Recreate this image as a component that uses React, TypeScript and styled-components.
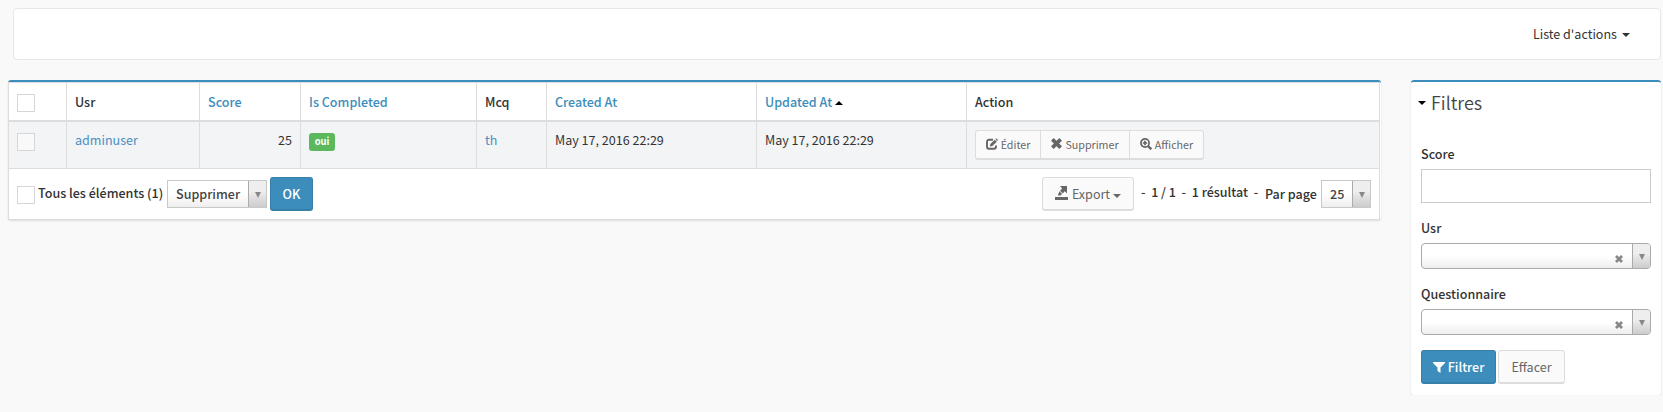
import React from 'react';
import styled, { createGlobalStyle, css } from 'styled-components';

const Global = createGlobalStyle`
  * { box-sizing: border-box; }
  body {
    margin: 0;
    background: #f9f9f9;
    color: #333;
    font-family: "Source Sans Pro", "Noto Sans CJK SC", "Noto Sans", sans-serif;
    font-size: 12.55px;
    line-height: 20px;
  }
`;

const Page = styled.div`
  width: 1663px;
  padding: 8px 0 0;
`;

const Navbar = styled.nav`
  display: flex;
  justify-content: flex-end;
  align-items: center;
  height: 52px;
  margin: 0 2px 20px 13px;
  padding: 0 30px 1px 0;
  background: #fff;
  border: 1px solid #e7e7e7;
  border-radius: 4px;
`;

const NavLink = styled.a`
  display: flex;
  align-items: center;
  gap: 5px;
`;

const Caret = styled.span<{ $up?: boolean }>`
  display: inline-block;
  width: 0;
  height: 0;
  border-left: 4px solid transparent;
  border-right: 4px solid transparent;
  ${p => (p.$up ? css`border-bottom: 4px solid currentColor;` : css`border-top: 4px solid currentColor;`)}
`;

const NavCaret = styled(Caret)`
  margin-top: 3px;
`;

const Content = styled.main`
  display: flex;
  align-items: flex-start;
  gap: 30px;
  padding-left: 8px;
`;

const Box = styled.section<{ $width: number }>`
  width: ${p => p.$width}px;
  background: #fff;
  border-top: 2px solid #3c8dbc;
  border-radius: 3px;
  box-shadow: 0 1px 2px rgba(0, 0, 0, 0.12);
`;

const ListTable = styled.table`
  width: 1372px;
  table-layout: fixed;
  border-collapse: separate;
  border-spacing: 0;
  border: 1px solid #ddd;
  border-bottom: 0;
`;

const HeadCell = styled.th<{ $sortable?: boolean }>`
  height: 39px;
  padding: 9px 8px 8px;
  border-bottom: 2px solid #ddd;
  text-align: left;
  vertical-align: top;
  font-weight: 500;
  color: ${p => (p.$sortable ? '#3c8dbc' : '#333')};
  & + & { border-left: 1px solid #ddd; }
`;

const Cell = styled.td<{ $right?: boolean }>`
  height: 47px;
  padding: 8px;
  vertical-align: top;
  text-align: ${p => (p.$right ? 'right' : 'left')};
  background: #f3f4f5;
  border-bottom: 1px solid #ddd;
  & + & { border-left: 1px solid #ddd; }
`;

const SortMark = styled.span`
  color: #000;
  margin-left: 3px;
  ${Caret} { vertical-align: 2px; }
`;

const Link = styled.a`
  color: #4a8fc2;
`;

const Check = styled.span<{ $muted?: boolean }>`
  display: block;
  width: 18px;
  height: 18px;
  margin-top: ${p => (p.$muted ? 3 : 2)}px;
  background: ${p => (p.$muted ? '#f9f9f9' : '#fff')};
  border: 1px solid #d6d6d6;
`;

const Badge = styled.span`
  display: block;
  width: 26px;
  height: 18px;
  margin-top: 3px;
  border-radius: 3px;
  background: #5cb85c;
  color: #fff;
  font-size: 9.4px;
  font-weight: 700;
  line-height: 17px;
  text-align: center;
`;

const ButtonGroup = styled.div`
  display: flex;
  height: 30px;
`;

const SmallButton = styled.button<{ $width: number }>`
  display: flex;
  align-items: center;
  justify-content: center;
  gap: 3px;
  width: ${p => p.$width}px;
  padding: 0;
  border: 1px solid #ddd;
  border-bottom-width: 2px;
  background: #fafafa;
  color: #666;
  font: inherit;
  font-size: 10.7px;
  & + & { margin-left: -1px; }
  &:first-child { border-radius: 3px 0 0 3px; }
  &:last-child { border-radius: 0 3px 3px 0; }
  svg { margin-bottom: 2px; }
`;

const Button = styled.button<{ $primary?: boolean; $width: number }>`
  display: flex;
  align-items: center;
  justify-content: center;
  gap: 3px;
  width: ${p => p.$width}px;
  height: 34px;
  padding: 1px 0 0;
  border: 1px solid ${p => (p.$primary ? '#367fa9' : '#ddd')};
  border-bottom-width: 2px;
  border-radius: 3px;
  background: ${p => (p.$primary ? '#3c8dbc' : '#fafafa')};
  color: ${p => (p.$primary ? '#fff' : '#666')};
  font: inherit;
  font-weight: ${p => (p.$primary ? 500 : 400)};
`;

const ExportButton = styled(Button)`
  ${Caret} { margin-top: 3px; }
  svg { margin-bottom: 3px; }
`;

const Footer = styled.div`
  display: flex;
  justify-content: space-between;
  height: 51px;
  width: 1372px;
  padding: 8px;
  border: 1px solid #ddd;
  border-top: 0;
  font-weight: 500;
`;

const FooterSide = styled.div`
  display: flex;
  align-items: flex-start;
`;

const BatchLabel = styled.span`
  width: 126px;
  margin: 6px 3px 0 3px;
  white-space: nowrap;
`;

const FooterCheck = styled(Check)`
  margin-top: 9px;
`;

const PagerText = styled.span`
  width: 118px;
  margin: 5px 6px 0 7px;
  white-space: pre;
`;

const PerPage = styled.span`
  width: 52px;
  margin: 7px 4px 0 0;
  white-space: nowrap;
`;

const Select = styled.span<{ $width: number }>`
  display: flex;
  width: ${p => p.$width}px;
  height: 28px;
  margin: 3px 0 0;
  border: 1px solid #c8c8c8;
  background: linear-gradient(to top, #eee 0%, #fff 50%);
  color: #444;
`;

const BatchSelect = styled(Select)`
  margin-right: 3px;
`;

const SelectValue = styled.span`
  flex: 1;
  padding: 3px 0 0 8px;
`;

const SelectArrow = styled.span`
  display: flex;
  align-items: center;
  justify-content: center;
  width: 18px;
  padding-top: 1px;
  border-left: 1px solid #aaa;
  background: linear-gradient(to top, #ccc 0%, #eee 60%);
`;

const Triangle = styled.span`
  border-left: 3px solid transparent;
  border-right: 3px solid transparent;
  border-top: 6px solid #888;
`;

const FilterHeader = styled.h3`
  display: flex;
  align-items: center;
  gap: 5px;
  margin: 0;
  height: 41px;
  padding: 0 0 1px 7px;
  color: #444;
  font-size: 18px;
  font-weight: 350;
  ${Caret} { color: #000; margin-top: 1px; }
`;

const Filters = styled.form`
  padding: 21px 10px 11px;
`;

const Field = styled.div`
  display: flex;
  flex-direction: column;
  margin-bottom: 15px;
`;

const Label = styled.label`
  height: 25px;
  font-weight: 500;
`;

const Input = styled.input`
  width: 230px;
  height: 34px;
  padding: 6px 12px;
  border: 1px solid #ccc;
  font: inherit;
`;

const Combo = styled.span`
  display: flex;
  height: 26px;
  border: 1px solid #aaa;
  border-radius: 4px;
  overflow: hidden;
  background: linear-gradient(to top, #eee 0%, #fff 50%);
`;

const ComboBody = styled.span`
  display: flex;
  flex: 1;
  justify-content: flex-end;
  padding: 11px 9px 0 0;
`;

const Actions = styled.div`
  display: flex;
  gap: 2px;
`;

const EditIcon = () => (
  <svg width="12" height="12" viewBox="0 0 12 12">
    <path d="M7 1.800H3Q1 1.800 1 3.800v5Q1 10.800 3 10.800h5Q10 10.800 10 8.800V7.400" fill="none" stroke="#666" strokeWidth="1.900" />
    <path d="M3.800 8.600l.5-2.500L8.800 1.700l2 2-4.500 4.400z" fill="#666" />
    <path d="M9.400 1.100l.8-.8 1.800 1.800-.8.800z" fill="#666" />
  </svg>
);

const CrossIcon = ({ size = 11, color = '#666' }: { size?: number; color?: string }) => (
  <svg width={size} height={size} viewBox="0 0 10 10">
    <path d="M2.400 0L5 2.600 7.600 0 10 2.400 7.400 5 10 7.600 7.600 10 5 7.400 2.400 10 0 7.600 2.600 5 0 2.400z" fill={color} />
  </svg>
);

const ZoomIcon = () => (
  <svg width="12" height="12" viewBox="0 0 12 12">
    <circle cx="5" cy="5" r="4.100" fill="none" stroke="#666" strokeWidth="1.700" />
    <path d="M8 8l3.300 3.300" stroke="#666" strokeWidth="2.400" />
    <path d="M5 2.800v4.400M2.800 5h4.400" stroke="#666" strokeWidth="1.700" />
  </svg>
);

const ExportIcon = () => (
  <svg width="14" height="14" viewBox="0 0 14 14">
    <path d="M0 11h13v3H0z" fill="#666" />
    <path d="M5 0h7v7.500L9.800 5.200 7.600 7.400 5 4.700 7.200 2.500z" fill="#666" />
    <path d="M4.400 5.300L7 8 5.500 9.500H2.800z" fill="#666" />
  </svg>
);

const FunnelIcon = () => (
  <svg width="12" height="11" viewBox="0 0 12 11">
    <path d="M0 0h12v1L7.500 5.500V11L4.500 9V5.500L0 1z" fill="#fff" />
  </svg>
);

const widths = [57, 133, 101, 176, 70, 210, 210, 413];

export default function App() {
  return (
    <Page>
      <Global />
      <Navbar>
        <NavLink>Liste d'actions <NavCaret /></NavLink>
      </Navbar>
      <Content>
        <Box $width={1373}>
          <ListTable>
            <colgroup>{widths.map((w, i) => <col key={i} width={w} />)}</colgroup>
            <thead>
              <tr>
                <HeadCell><Check /></HeadCell>
                <HeadCell>Usr</HeadCell>
                <HeadCell $sortable>Score</HeadCell>
                <HeadCell $sortable>Is Completed</HeadCell>
                <HeadCell>Mcq</HeadCell>
                <HeadCell $sortable>Created At</HeadCell>
                <HeadCell $sortable>Updated At<SortMark><Caret $up /></SortMark></HeadCell>
                <HeadCell>Action</HeadCell>
              </tr>
            </thead>
            <tbody>
              <tr>
                <Cell><Check $muted /></Cell>
                <Cell><Link>adminuser</Link></Cell>
                <Cell $right>25</Cell>
                <Cell><Badge>oui</Badge></Cell>
                <Cell><Link>th</Link></Cell>
                <Cell>May 17, 2016 22:29</Cell>
                <Cell>May 17, 2016 22:29</Cell>
                <Cell>
                  <ButtonGroup>
                    <SmallButton $width={66}><EditIcon />Éditer</SmallButton>
                    <SmallButton $width={90}><CrossIcon />Supprimer</SmallButton>
                    <SmallButton $width={75}><ZoomIcon />Afficher</SmallButton>
                  </ButtonGroup>
                </Cell>
              </tr>
            </tbody>
          </ListTable>
          <Footer>
            <FooterSide>
              <FooterCheck />
              <BatchLabel>Tous les éléments (1)</BatchLabel>
              <BatchSelect $width={100}><SelectValue>Supprimer</SelectValue><SelectArrow><Triangle /></SelectArrow></BatchSelect>
              <Button $primary $width={43}>OK</Button>
            </FooterSide>
            <FooterSide>
              <ExportButton $width={92}><ExportIcon />Export<Caret /></ExportButton>
              <PagerText>-  1 / 1  -  1 résultat  -</PagerText>
              <PerPage>Par page</PerPage>
              <Select $width={50}><SelectValue>25</SelectValue><SelectArrow><Triangle /></SelectArrow></Select>
            </FooterSide>
          </Footer>
        </Box>
        <Box $width={250}>
          <FilterHeader><Caret />Filtres</FilterHeader>
          <Filters>
            <Field><Label>Score</Label><Input /></Field>
            {['Usr', 'Questionnaire'].map(name => (
              <Field key={name}>
                <Label>{name}</Label>
                <Combo>
                  <ComboBody><CrossIcon size={8} color="#888" /></ComboBody>
                  <SelectArrow><Triangle /></SelectArrow>
                </Combo>
              </Field>
            ))}
            <Actions>
              <Button type="button" $primary $width={75}><FunnelIcon />Filtrer</Button>
              <Button type="button" $width={67}>Effacer</Button>
            </Actions>
          </Filters>
        </Box>
      </Content>
    </Page>
  );
}
